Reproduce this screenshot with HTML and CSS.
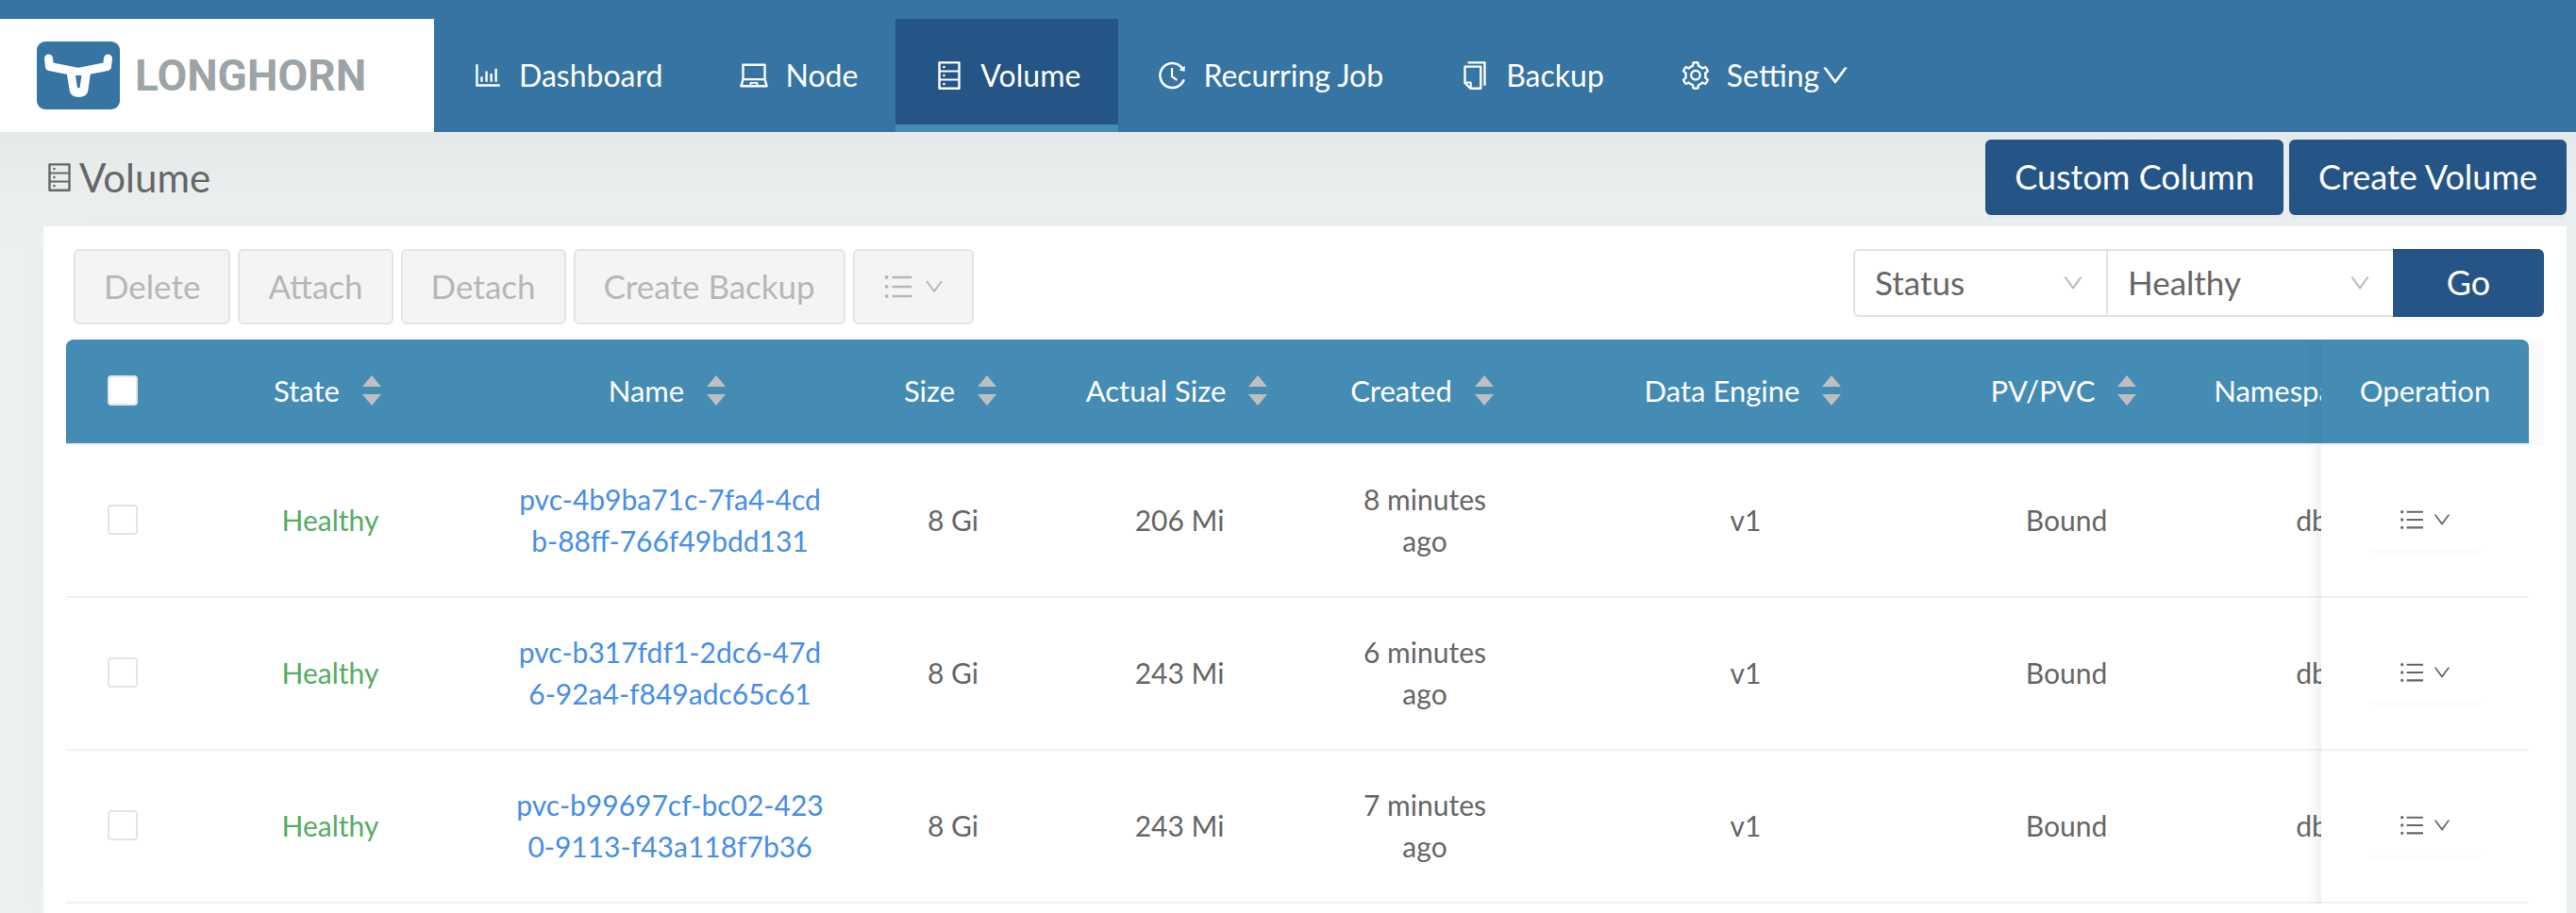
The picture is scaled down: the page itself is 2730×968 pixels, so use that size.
FILE: index.html
```html
<!DOCTYPE html>
<html lang="en">
<head>
<meta charset="utf-8">
<title>Longhorn - Volume</title>
<link rel="stylesheet" href="styles.css">
</head>
<body>
<svg class="sprite" aria-hidden="true">
  <symbol id="i-chart" viewBox="0 0 1024 1024"><path d="M888 792H200V168c0-4.400-3.600-8-8-8h-56c-4.400 0-8 3.600-8 8v688c0 4.400 3.600 8 8 8h752c4.400 0 8-3.600 8-8v-56c0-4.400-3.600-8-8-8zM280 552h72v160h-72zM432 376h72v336h-72zM584 454h72v258h-72zM736 296h72v416h-72z"/></symbol>
  <symbol id="i-laptop" viewBox="0 0 1024 1024"><path d="M956.900 845.100L896.400 632V168c0-17.700-14.300-32-32-32h-704c-17.700 0-32 14.300-32 32v464L67.900 845.100C60.400 866 75.800 888 98 888h828.800c22.200 0 37.600-22 30.100-42.900zM200.400 208h624v395h-624V208zm228.300 608l8.100-37h150.300l8.100 37H428.700zm224 0l-19.100-86.700c-.8-3.700-4.100-6.300-7.800-6.300H398.200c-3.800 0-7 2.600-7.800 6.300L371.300 816H151l42.300-149h638.200l42.300 149H652.700z"/></symbol>
  <symbol id="i-database" viewBox="0 0 1024 1024"><path d="M832 64H192c-17.700 0-32 14.300-32 32v832c0 17.700 14.300 32 32 32h640c17.700 0 32-14.300 32-32V96c0-17.700-14.300-32-32-32zm-600 72h560v208H232V136zm560 480H232V408h560v208zm0 272H232V680h560v208zM304 240a40 40 0 1 0 80 0 40 40 0 1 0-80 0zm0 272a40 40 0 1 0 80 0 40 40 0 1 0-80 0zm0 272a40 40 0 1 0 80 0 40 40 0 1 0-80 0z"/></symbol>
  <symbol id="i-history" viewBox="0 0 1024 1024"><path d="M536.100 273H488c-4.400 0-8 3.600-8 8v275.300c0 2.600 1.200 5 3.300 6.500l165.300 120.700c3.600 2.600 8.600 1.900 11.200-1.700l28.600-39c2.700-3.700 1.900-8.700-1.700-11.200L544.100 528.500V281c0-4.400-3.600-8-8-8zm219.800 75.200l156.800 38.300c5 1.200 9.900-2.600 9.900-7.700l.8-161.500c0-6.700-7.700-10.500-12.900-6.300L752.900 334.100a8 8 0 0 0 3 14.100zm167.700 301.100l-56.700-19.500a8 8 0 0 0-10.100 4.800c-1.900 5.100-3.900 10.100-6 15.100-17.800 42.100-43.300 80-75.900 112.500a353 353 0 0 1-112.500 75.900 352.180 352.180 0 0 1-137.700 27.800c-47.800 0-94.100-9.300-137.700-27.800a353 353 0 0 1-112.500-75.900c-32.500-32.500-58-70.400-75.900-112.500A353.440 353.440 0 0 1 171 512c0-47.800 9.300-94.200 27.800-137.800 17.800-42.100 43.300-80 75.900-112.500a353 353 0 0 1 112.500-75.900C430.600 167.300 477 158 524.800 158s94.100 9.300 137.700 27.800A353 353 0 0 1 775 261.700c10.200 10.300 19.800 21 28.600 32.300l59.800-46.800C784.700 146.600 662.200 81.900 524.600 82 285 82.100 92.600 276.700 95 516.400 97.400 751.900 288.900 942 524.800 942c185.500 0 343.500-117.600 403.700-282.300 1.500-4.200-.7-8.900-4.900-10.400z"/></symbol>
  <symbol id="i-copy" viewBox="0 0 1024 1024"><path d="M832 64H296c-4.400 0-8 3.600-8 8v56c0 4.400 3.600 8 8 8h496v688c0 4.400 3.600 8 8 8h56c4.400 0 8-3.600 8-8V96c0-17.700-14.300-32-32-32zM704 192H192c-17.700 0-32 14.300-32 32v530.700c0 8.500 3.400 16.600 9.400 22.600l173.300 173.300c2.200 2.200 4.700 4 7.400 5.500v1.900h4.200c3.500 1.300 7.200 2 11 2H704c17.700 0 32-14.300 32-32V224c0-17.700-14.300-32-32-32zM350 856.200L263.900 770H350v86.200zM664 888H414V746c0-22.100-17.900-40-40-40H232V264h432v624z"/></symbol>
  <symbol id="i-setting" viewBox="0 0 1024 1024"><path d="M924.800 625.700l-65.500-56c3.100-19 4.700-38.400 4.700-57.800s-1.600-38.800-4.700-57.800l65.500-56a32.030 32.030 0 0 0 9.300-35.200l-.9-2.600a443.740 443.740 0 0 0-79.700-137.900l-1.800-2.100a32.120 32.120 0 0 0-35.100-9.500l-81.300 28.900c-30-24.600-63.500-44-99.700-57.600l-15.700-85a32.050 32.050 0 0 0-25.800-25.700l-2.700-.5c-52.100-9.400-106.900-9.400-159 0l-2.700.5a32.050 32.050 0 0 0-25.800 25.700l-15.800 85.400a351.860 351.860 0 0 0-99 57.400l-81.900-29.100a32 32 0 0 0-35.100 9.500l-1.800 2.100a446.020 446.020 0 0 0-79.700 137.900l-.9 2.600c-4.500 12.500-.8 26.500 9.300 35.200l66.300 56.600c-3.100 18.800-4.600 38-4.600 57.100 0 19.200 1.500 38.400 4.600 57.100L99 625.500a32.030 32.030 0 0 0-9.300 35.200l.9 2.600c18.100 50.400 44.900 96.900 79.700 137.900l1.800 2.100a32.120 32.120 0 0 0 35.100 9.500l81.900-29.100c29.800 24.500 63.100 43.900 99 57.400l15.800 85.400a32.050 32.050 0 0 0 25.800 25.700l2.700.5a449.400 449.400 0 0 0 159 0l2.700-.5a32.050 32.050 0 0 0 25.800-25.700l15.700-85a350 350 0 0 0 99.700-57.600l81.300 28.900a32 32 0 0 0 35.100-9.500l1.800-2.100c34.800-41.100 61.600-87.500 79.700-137.900l.9-2.600c4.500-12.300.8-26.300-9.300-35zM788.300 465.900c2.500 15.100 3.800 30.600 3.800 46.100s-1.300 31-3.800 46.100l-6.600 40.100 74.700 63.900a370.030 370.030 0 0 1-42.600 73.600L721 702.800l-31.400 25.800c-23.900 19.600-50.500 35-79.300 45.800l-38.100 14.300-17.900 97a377.500 377.500 0 0 1-85 0l-17.900-97.200-37.800-14.500c-28.500-10.800-55-26.200-78.700-45.700l-31.400-25.900-93.400 33.200c-17-22.900-31.200-47.600-42.600-73.600l75.500-64.500-6.500-40c-2.400-14.900-3.700-30.300-3.700-45.500 0-15.300 1.200-30.600 3.700-45.500l6.500-40-75.500-64.500c11.300-26.100 25.600-50.700 42.600-73.600l93.400 33.200 31.400-25.900c23.700-19.500 50.200-34.900 78.700-45.700l37.900-14.300 17.900-97.200c28.100-3.200 56.800-3.200 85 0l17.900 97 38.100 14.300c28.700 10.800 55.400 26.200 79.300 45.800l31.400 25.800 92.800-32.900c17 22.900 31.200 47.600 42.600 73.600L781.800 426l6.500 39.900zM512 326c-97.200 0-176 78.800-176 176s78.800 176 176 176 176-78.800 176-176-78.800-176-176-176zm79.200 255.200A111.600 111.600 0 0 1 512 614c-29.900 0-58-11.700-79.200-32.800A111.600 111.600 0 0 1 400 502c0-29.900 11.700-58 32.800-79.200C454 401.600 482.100 390 512 390c29.900 0 58 11.600 79.200 32.800A111.600 111.600 0 0 1 624 502c0 29.900-11.700 58-32.800 79.200z"/></symbol>
  <symbol id="i-down" viewBox="0 0 1024 1024"><path d="M884 256h-75c-5.100 0-9.900 2.500-12.900 6.600L512 654.200 227.900 262.600c-3-4.100-7.800-6.600-12.900-6.600h-75c-6.500 0-10.300 7.400-6.500 12.700l352.600 486.100c12.800 17.600 39 17.600 51.700 0l352.600-486.100c3.900-5.300.1-12.700-6.400-12.700z"/></symbol>
  <symbol id="i-list" viewBox="0 0 1024 1024"><path d="M328 192h592v72H328zM328 476h592v72H328zM328 760h592v72H328zM104 228a56 56 0 1 0 112 0 56 56 0 1 0-112 0zM104 512a56 56 0 1 0 112 0 56 56 0 1 0-112 0zM104 796a56 56 0 1 0 112 0 56 56 0 1 0-112 0z"/></symbol>
  <symbol id="i-sort" viewBox="0 0 20 32"><path d="M10 0l10 12H0zM0 20h20L10 32z"/></symbol>
</svg>

<header class="header">
  <a class="brand" href="#">
    <svg class="brand-mark" viewBox="0 0 88 72" aria-hidden="true">
      <rect width="88" height="72" rx="9" fill="#3674a3"/>
      <path d="M12.500 18l1 8.500 30.500 6 30.500-6 1-8.500" fill="none" stroke="#fff" stroke-width="9" stroke-linecap="round" stroke-linejoin="round"/>
      <path d="M31 29h26.500l-3 22q-1 8-10 8t-10-8z" fill="#fff"/>
      <path d="M41 36h6.500l-2 13h-2.500z" fill="#3674a3"/>
    </svg>
    <span class="brand-name">LONGHORN</span>
  </a>
  <nav class="nav">
    <a class="nav-item" href="#"><svg class="icon"><use href="#i-chart"/></svg><span>Dashboard</span></a>
    <a class="nav-item" href="#"><svg class="icon"><use href="#i-laptop"/></svg><span>Node</span></a>
    <a class="nav-item nav-item-active" href="#" aria-current="page"><svg class="icon"><use href="#i-database"/></svg><span>Volume</span></a>
    <a class="nav-item" href="#"><svg class="icon"><use href="#i-history"/></svg><span>Recurring Job</span></a>
    <a class="nav-item" href="#"><svg class="icon"><use href="#i-copy"/></svg><span>Backup</span></a>
    <a class="nav-item" href="#"><svg class="icon"><use href="#i-setting"/></svg><span class="nav-drop">Setting<svg class="icon"><use href="#i-down"/></svg></span></a>
  </nav>
</header>

<main class="main">
  <div class="title-row">
    <h1 class="title"><svg class="icon"><use href="#i-database"/></svg>Volume</h1>
    <div class="title-actions">
      <button class="btn btn-primary" type="button">Custom Column</button>
      <button class="btn btn-primary" type="button">Create Volume</button>
    </div>
  </div>

  <section class="card">
    <div class="toolbar">
      <div class="bulk">
        <button class="btn" type="button" disabled>Delete</button>
        <button class="btn" type="button" disabled>Attach</button>
        <button class="btn" type="button" disabled>Detach</button>
        <button class="btn" type="button" disabled>Create Backup</button>
        <button class="btn btn-menu" type="button" disabled aria-label="More actions"><svg class="icon-list"><use href="#i-list"/></svg><svg class="icon-caret"><use href="#i-down"/></svg></button>
      </div>
      <form class="filter">
        <div class="select select-field"><select aria-label="Filter field"><option>Status</option></select><svg class="select-arrow"><use href="#i-down"/></svg></div>
        <div class="select select-value"><select aria-label="Filter value"><option>Healthy</option></select><svg class="select-arrow"><use href="#i-down"/></svg></div>
        <button class="btn btn-primary btn-go" type="button">Go</button>
      </form>
    </div>

    <div class="table-frame">
      <div class="table-scroll">
        <table class="table">
          <colgroup><col class="c-check"><col class="c-state"><col class="c-name"><col class="c-size"><col class="c-actual"><col class="c-created"><col class="c-engine"><col class="c-pv"><col class="c-ns"><col class="c-op"></colgroup>
          <thead>
            <tr>
              <th><input class="check" type="checkbox" aria-label="Select all"></th>
              <th><span class="head">State<svg class="sort"><use href="#i-sort"/></svg></span></th>
              <th><span class="head">Name<svg class="sort"><use href="#i-sort"/></svg></span></th>
              <th><span class="head">Size<svg class="sort"><use href="#i-sort"/></svg></span></th>
              <th><span class="head">Actual Size<svg class="sort"><use href="#i-sort"/></svg></span></th>
              <th><span class="head">Created<svg class="sort"><use href="#i-sort"/></svg></span></th>
              <th><span class="head">Data Engine<svg class="sort"><use href="#i-sort"/></svg></span></th>
              <th><span class="head">PV/PVC<svg class="sort"><use href="#i-sort"/></svg></span></th>
              <th><span class="head">Namespace<svg class="sort"><use href="#i-sort"/></svg></span></th>
              <th class="fixed">Operation</th>
            </tr>
          </thead>
          <tbody>
            <tr>
              <td><input class="check" type="checkbox" aria-label="Select volume 1"></td>
              <td class="healthy">Healthy</td>
              <td><a class="link" href="#">pvc-4b9ba71c-7fa4-4cd<br>b-88ff-766f49bdd131</a></td>
              <td>8 Gi</td><td>206 Mi</td><td>8 minutes<br>ago</td><td>v1</td><td>Bound</td><td>db</td>
              <td class="fixed"><button class="row-menu" type="button" aria-label="Operations"><svg class="icon-list"><use href="#i-list"/></svg><svg class="icon-caret"><use href="#i-down"/></svg></button></td>
            </tr>
            <tr>
              <td><input class="check" type="checkbox" aria-label="Select volume 2"></td>
              <td class="healthy">Healthy</td>
              <td><a class="link" href="#">pvc-b317fdf1-2dc6-47d<br>6-92a4-f849adc65c61</a></td>
              <td>8 Gi</td><td>243 Mi</td><td>6 minutes<br>ago</td><td>v1</td><td>Bound</td><td>db</td>
              <td class="fixed"><button class="row-menu" type="button" aria-label="Operations"><svg class="icon-list"><use href="#i-list"/></svg><svg class="icon-caret"><use href="#i-down"/></svg></button></td>
            </tr>
            <tr>
              <td><input class="check" type="checkbox" aria-label="Select volume 3"></td>
              <td class="healthy">Healthy</td>
              <td><a class="link" href="#">pvc-b99697cf-bc02-423<br>0-9113-f43a118f7b36</a></td>
              <td>8 Gi</td><td>243 Mi</td><td>7 minutes<br>ago</td><td>v1</td><td>Bound</td><td>db</td>
              <td class="fixed"><button class="row-menu" type="button" aria-label="Operations"><svg class="icon-list"><use href="#i-list"/></svg><svg class="icon-caret"><use href="#i-down"/></svg></button></td>
            </tr>
          </tbody>
        </table>
      </div>
      <div class="table-gutter"></div>
    </div>
  </section>
</main>
</body>
</html>
```
FILE: styles.css
```css
* {
  box-sizing: border-box;
}

body {
  margin: 0;
  min-height: 100vh;
  display: flex;
  flex-direction: column;
  background: #ecf0f1;
  color: #666;
  font: 30px/44px Lato, "Open Sans", sans-serif;
}

a {
  color: inherit;
  text-decoration: none;
}

button,
select {
  font: inherit;
  color: inherit;
}

svg {
  flex: none;
  fill: currentColor;
}

.sprite {
  position: absolute;
  width: 0;
  height: 0;
}

.icon {
  width: 34px;
  height: 34px;
}

/* Header */
.header {
  display: flex;
  height: 140px;
  padding-top: 20px;
  background: #3674a3;
  color: #fff;
}

.brand {
  display: flex;
  align-items: center;
  gap: 16px;
  width: 460px;
  padding-left: 39px;
  background: #fff;
}

.brand-mark {
  width: 88px;
  height: 72px;
}

.brand-name {
  color: #9ca4a7;
  font: 700 46px/60px Roboto, sans-serif;
}

.nav {
  display: flex;
  font-size: 32px;
}

.nav-item {
  display: flex;
  align-items: center;
  gap: 16px;
  padding: 0 40px;
}

.nav-item-active {
  background: #255586;
  box-shadow: inset 0 -8px 0 #448cb4;
}

.nav-drop {
  display: flex;
  align-items: center;
}

/* Page */
.main {
  flex: 1;
  display: flex;
  flex-direction: column;
  padding: 0 10px 0 46px;
  background: linear-gradient(#e5e9ea, #ebefef 80px, #ecf0f1 120px);
}

.title-row {
  display: flex;
  justify-content: space-between;
  height: 100px;
  padding-top: 8px;
}

.title {
  display: flex;
  align-items: center;
  gap: 4px;
  margin: 0;
  height: 80px;
  font-size: 42px;
  font-weight: 400;
}

.title-actions {
  display: flex;
  gap: 6px;
}

.btn {
  height: 80px;
  padding: 0 30px 2px;
  border: 2px solid #e4e4e4;
  border-radius: 6px;
  background: #f4f4f4;
  color: #b7b7b7;
  font-size: 35px;
}

.btn-primary {
  padding: 0 29px 2px;
  border-color: #255586;
  background: #255586;
  color: #fff;
  font-size: 36px;
  box-shadow: 0 4px 0 rgba(0, 0, 0, 0.02);
}

.card {
  flex: 1;
  padding: 24px 24px 0;
  background: #fff;
  box-shadow: 0 0 40px rgba(0, 0, 0, 0.02);
}

.toolbar {
  display: flex;
  justify-content: space-between;
  align-items: flex-start;
  padding-left: 8px;
  height: 96px;
}

.bulk {
  display: flex;
  gap: 8px;
}

.btn-menu {
  display: flex;
  align-items: center;
  gap: 8px;
  padding: 0 28px;
}

.btn-menu .icon-list {
  width: 36px;
  height: 36px;
}

.btn-menu .icon-caret {
  width: 24px;
  height: 24px;
}

.filter {
  display: flex;
}

.select {
  position: relative;
  height: 72px;
  border: 2px solid #e4e4e4;
  border-right: 0;
}

.select-field {
  width: 268px;
  border-radius: 6px 0 0 6px;
}

.select-value {
  width: 304px;
}

.select select {
  appearance: none;
  width: 100%;
  height: 100%;
  padding: 0 60px 2px 21px;
  border: 0;
  background: transparent;
  font-size: 35px;
}

.select-arrow {
  position: absolute;
  right: 22px;
  top: 21px;
  width: 26px;
  height: 26px;
  color: #bbb;
  pointer-events: none;
}

.btn-go {
  width: 160px;
  height: 72px;
  border-radius: 0 6px 6px 0;
}

/* Table */
.table-frame {
  display: flex;
  align-items: flex-start;
}

.table-scroll {
  flex: 1;
  min-width: 0;
  overflow-x: auto;
  scrollbar-width: none;
  border-radius: 8px 8px 0 0;
}

.table-gutter {
  width: 16px;
  height: 112px;
  background: #fafafa;
}

.table {
  width: 100%;
  min-width: 2740px;
  table-layout: fixed;
  border-collapse: separate;
  border-spacing: 0;
  text-align: center;
}

.c-check { width: 120px; }
.c-state { width: 320px; }
.c-name { width: 400px; }
.c-size { width: 200px; }
.c-actual { width: 280px; }
.c-created { width: 240px; }
.c-engine { width: 440px; }
.c-pv { width: 240px; }
.c-ns { width: 280px; }
.c-op { width: 220px; }

.table th {
  height: 112px;
  padding: 0 0 2px;
  border-bottom: 2px solid #f2f2f2;
  background: #448cb4;
  background-clip: padding-box;
  color: #fff;
  font-size: 31px;
  font-weight: 400;
}

.table td {
  height: 162px;
  padding: 0 0 2px;
  border-bottom: 2px solid #f2f2f2;
  background: #fff;
}

.head {
  display: flex;
  align-items: center;
  justify-content: center;
  gap: 24px;
  padding-right: 6px;
}

.sort {
  width: 20px;
  height: 32px;
  color: #bfbfbf;
}

.check {
  appearance: none;
  display: block;
  width: 32px;
  height: 32px;
  margin: 0 auto;
  border: 2px solid #e4e4e4;
  border-radius: 4px;
  background: #fff;
}

.healthy {
  color: #56ac64;
}

.link {
  color: #478ee6;
}

.table .fixed {
  position: sticky;
  right: 0;
}

.fixed::before {
  content: "";
  position: absolute;
  top: 0;
  bottom: -2px;
  left: -16px;
  width: 16px;
  background: linear-gradient(to left, rgba(0, 0, 0, 0.05), transparent);
}

th.fixed::before {
  bottom: 0;
  background: linear-gradient(to left, rgba(0, 0, 0, 0.03), transparent);
}

.row-menu {
  display: inline-flex;
  align-items: center;
  justify-content: center;
  gap: 6px;
  width: 118px;
  height: 64px;
  padding: 0;
  border: 0;
  border-radius: 6px;
  background: #fff;
  box-shadow: 0 4px 0 rgba(0, 0, 0, 0.015);
  vertical-align: middle;
}

.row-menu .icon-list {
  width: 30px;
  height: 30px;
}

.row-menu .icon-caret {
  width: 22px;
  height: 22px;
}
```
